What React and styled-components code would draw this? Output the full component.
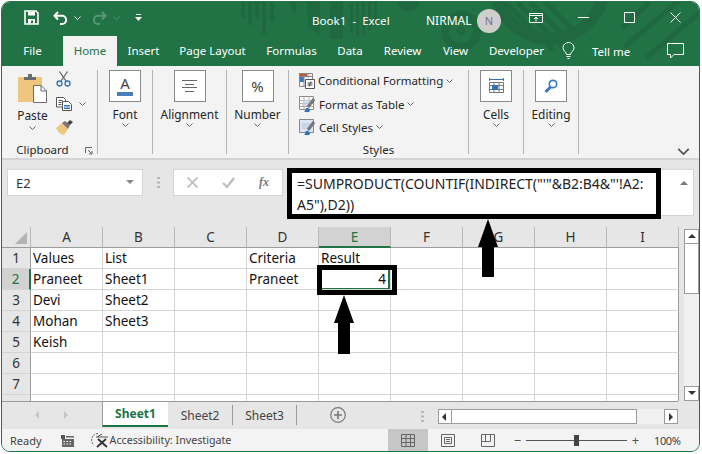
import React from 'react';
import styled, { createGlobalStyle } from 'styled-components';

const Global = createGlobalStyle`
  html, body { margin: 0; padding: 0; background: #fff; }
  body { font-family: "Noto Sans", "Open Sans", sans-serif; }
`;

const GREEN = '#217346';
const DECO = '#1f6840';

const Frame = styled.div`
  position: relative;
  width: 702px;
  height: 454px;
  overflow: hidden;
`;

const Win = styled.div`
  box-sizing: border-box;
  margin: 1px 0 0 1px;
  width: 699px;
  height: 451px;
  border: 1px solid ${GREEN};
  border-radius: 9px;
  overflow: hidden;
  display: flex;
  flex-direction: column;
  background: #e6e6e6;
`;

const Head = styled.div`
  position: relative;
  height: 64px;
  flex: none;
  background: ${GREEN};
  color: #fff;
  font-size: 11.5px;
`;

const Deco = styled.svg`
  position: absolute;
  left: 0;
  top: 0;
`;

const TitleBar = styled.div`
  position: relative;
  height: 34px;
  display: flex;
  align-items: center;
`;

const Qat = styled.div`
  display: flex;
  align-items: center;
  width: 310px;
  height: 100%;
  padding-bottom: 3px;
  box-sizing: border-box;
`;

const QatSlot = styled.div`
  width: ${p => p.$w}px;
  margin-left: ${p => p.$ml || 0}px;
  display: flex;
  justify-content: center;
  opacity: ${p => (p.$dim ? 0.25 : 1)};
`;

const DocTitle = styled.div`
  width: 114px;
  font-size: 11.6px;
  white-space: pre;
  margin-top: 3px;
`;

const UserName = styled.div`
  width: 51px;
  font-size: 12px;
  margin-top: 3px;
`;

const Avatar = styled.div`
  width: 24px;
  height: 24px;
  margin-top: 3px;
  border-radius: 50%;
  background: #d0cdcd;
  color: #7a6f93;
  font-size: 11px;
  display: flex;
  align-items: center;
  justify-content: center;
`;

const WinButton = styled.div`
  width: ${p => p.$w}px;
  margin-left: ${p => p.$ml || 0}px;
  display: flex;
  justify-content: center;
  margin-bottom: 3px;
`;

const TabRow = styled.div`
  position: relative;
  height: 30px;
  display: flex;
`;

const RibbonTab = styled.div`
  width: ${p => p.$w}px;
  margin-right: ${p => p.$mr || 0}px;
  display: flex;
  align-items: center;
  justify-content: center;
  padding-bottom: 1px;
  box-sizing: border-box;
  background: ${p => (p.$active ? '#f3f3f3' : 'transparent')};
  color: ${p => (p.$active ? GREEN : '#fff')};
`;

const TellMe = styled.div`
  display: flex;
  align-items: center;
  gap: 17px;
  margin-left: 3px;
`;

const CommentSlot = styled.div`
  position: absolute;
  right: 15px;
  top: 7px;
`;

const Ribbon = styled.div`
  box-sizing: border-box;
  height: 94px;
  flex: none;
  padding: 4px 0 0;
  background: #f3f3f3;
  border-bottom: 2px solid #d4d4d4;
  display: flex;
  position: relative;
  color: #262626;
  font-size: 11.9px;
`;

const Group = styled.div`
  box-sizing: border-box;
  width: ${p => p.$w}px;
  height: 84px;
  border-right: 1px solid #b5b5b5;
  display: flex;
  flex-direction: column;
  align-items: center;
  position: relative;
`;

const BigBox = styled.div`
  box-sizing: border-box;
  width: 32px;
  height: 32px;
  background: #fff;
  border: 1px solid #8a8a8a;
  display: flex;
  flex-direction: column;
  align-items: center;
  justify-content: center;
  color: #444;
`;

const FontLetter = styled.span`
  font-size: 15px;
  line-height: 15px;
  color: #444;
`;

const FontBar = styled.div`
  width: 16px;
  height: 4px;
  background: #4a7ebb;
  margin-top: 1px;
`;

const PercentSign = styled.span`
  font-size: 15px;
  line-height: 18px;
`;

const BigLabel = styled.div`
  margin-top: 3px;
  line-height: 18px;
`;

const Chev = styled.svg`
  display: block;
  flex: none;
`;

const ClipBody = styled.div`
  display: flex;
  width: 100%;
  height: 70px;
`;

const PasteCol = styled.div`
  width: 47px;
  margin-left: 7px;
  padding-top: 3px;
  display: flex;
  flex-direction: column;
  align-items: center;
`;

const PasteLabel = styled.div`
  line-height: 16px;
  margin-top: 4px;
  margin-bottom: 3px;
`;

const SmallCol = styled.div`
  display: flex;
  flex-direction: column;
  gap: 9.5px;
  padding-top: 1px;
`;

const SmallRow = styled.div`
  display: flex;
  align-items: center;
  gap: 7px;
`;

const GroupLabel = styled.div`
  position: absolute;
  left: 0;
  right: 0;
  bottom: -3px;
  padding-right: ${p => p.$pr || 0}px;
  text-align: center;
  line-height: 14px;
  font-size: 11.5px;
`;

const Launcher = styled.div`
  position: absolute;
  right: 4px;
  bottom: -1px;
  display: flex;
`;

const StyleList = styled.div`
  align-self: stretch;
  display: flex;
  flex-direction: column;
  margin-top: -1px;
  padding-left: 10px;
  font-size: 11.5px;
`;

const StyleRow = styled.div`
  height: 23.4px;
  display: flex;
  align-items: center;
  gap: 3px;
  white-space: nowrap;
`;

const Collapse = styled.div`
  position: absolute;
  right: 9px;
  bottom: 3px;
  display: flex;
`;

const FormulaRow = styled.div`
  height: 67px;
  flex: none;
  padding: 9px 0 0 5px;
  box-sizing: border-box;
  display: flex;
  align-items: flex-start;
`;

const NameBox = styled.div`
  box-sizing: border-box;
  width: 136px;
  height: 27px;
  background: #fff;
  border: 1px solid #d4d4d4;
  display: flex;
  align-items: center;
  justify-content: space-between;
  padding: 0 8px;
  font-size: 13px;
  color: #333;
`;

const Grip = styled.div`
  width: 30px;
  height: 27px;
  display: flex;
  align-items: center;
  justify-content: center;
`;

const FxBox = styled.div`
  box-sizing: border-box;
  width: 110px;
  height: 27px;
  background: #fff;
  border: 1px solid #d4d4d4;
  display: flex;
  align-items: center;
  justify-content: space-between;
  padding: 0 13px 0 13px;
`;

const FxLabel = styled.span`
  font-family: "Liberation Serif", serif;
  font-style: italic;
  font-weight: 700;
  font-size: 12px;
  color: #777;
`;

const FormulaBox = styled.div`
  box-sizing: border-box;
  width: 407px;
  height: 47px;
  margin-left: 4px;
  background: #fff;
  border: 1px solid #d4d4d4;
  position: relative;
  padding: 3px 0 0 9px;
  font-size: 14px;
  line-height: 21px;
  color: #222;
  white-space: nowrap;
`;

const FormulaCaret = styled.div`
  position: absolute;
  right: 5px;
  top: 10px;
  display: flex;
`;

const SheetArea = styled.div`
  height: 174px;
  flex: none;
  display: flex;
  background: #e6e6e6;
`;

const Grid = styled.div`
  display: grid;
  grid-template-columns: 29px repeat(9, 72px);
  grid-auto-rows: 21px;
  height: 174px;
  overflow: hidden;
  font-size: 13.5px;
  color: #111;
`;

const Corner = styled.div`
  border-right: 1px solid #b9b9b9;
  border-bottom: 1px solid #9b9b9b;
  box-sizing: border-box;
  display: flex;
  align-items: flex-end;
  justify-content: flex-end;
  padding: 0 3px 3px 0;
`;

const ColHead = styled.div`
  box-sizing: border-box;
  display: flex;
  align-items: center;
  justify-content: center;
  background: ${p => (p.$on ? '#d2d2d2' : '#e6e6e6')};
  color: ${p => (p.$on ? GREEN : '#333')};
  border-right: 1px solid #b9b9b9;
  border-bottom: ${p => (p.$on ? `2px solid ${GREEN}` : '1px solid #9b9b9b')};
`;

const RowHead = styled.div`
  box-sizing: border-box;
  display: flex;
  align-items: center;
  justify-content: center;
  background: ${p => (p.$on ? '#d2d2d2' : '#e6e6e6')};
  color: ${p => (p.$on ? GREEN : '#333')};
  border-right: ${p => (p.$on ? `2px solid ${GREEN}` : '1px solid #9b9b9b')};
  border-bottom: 1px solid #d4d4d4;
`;

const Cell = styled.div`
  box-sizing: border-box;
  background: #fff;
  border-right: 1px solid ${p => (p.$last ? '#9b9b9b' : '#d4d4d4')};
  border-bottom: 1px solid #d4d4d4;
  display: flex;
  align-items: center;
  justify-content: ${p => (p.$num ? 'flex-end' : 'flex-start')};
  padding: 0 4px 0 2px;
  white-space: nowrap;
  position: relative;
  box-shadow: ${p => (p.$sel ? `inset -2px -1px 0 ${GREEN}` : 'none')};
`;

const VScroll = styled.div`
  width: 20px;
  display: flex;
  flex-direction: column;
  align-items: flex-end;
  padding-top: 2px;
  box-sizing: border-box;
  height: 174px;
`;

const ScrollBtn = styled.div`
  box-sizing: border-box;
  width: ${p => p.$w || 15}px;
  height: ${p => p.$h || 15}px;
  background: #fff;
  border: 1px solid #9b9b9b;
  display: flex;
  align-items: center;
  justify-content: center;
  flex: none;
`;

const VThumb = styled.div`
  box-sizing: border-box;
  width: 15px;
  height: 50px;
  background: #fff;
  border: 1px solid #9b9b9b;
  border-top-width: 0;
`;

const VTrack = styled.div`
  width: 15px;
  flex: 1;
  background: #f0f0f0;
`;

const SheetBar = styled.div`
  box-sizing: border-box;
  height: 28px;
  flex: none;
  display: flex;
  align-items: flex-start;
  border-top: 1px solid #9b9b9b;
  width: 676px;
  color: #444;
  font-size: 12px;
`;

const SheetNav = styled.div`
  width: 100px;
  height: 26px;
  display: flex;
  align-items: center;
  justify-content: space-evenly;
  padding: 0 12px;
  box-sizing: border-box;
`;

const SheetTab = styled.div`
  box-sizing: border-box;
  width: ${p => p.$w}px;
  height: ${p => (p.$on ? 25 : 20)}px;
  margin-top: ${p => (p.$on ? 0 : 3)}px;
  display: flex;
  align-items: center;
  justify-content: center;
  background: ${p => (p.$on ? '#fff' : 'transparent')};
  color: ${p => (p.$on ? GREEN : '#444')};
  font-weight: ${p => (p.$on ? 700 : 400)};
  border-bottom: ${p => (p.$on ? `2px solid ${GREEN}` : 'none')};
  border-right: ${p => (p.$sep ? '1px solid #9b9b9b' : 'none')};
  border-left: ${p => (p.$on ? '1px solid #9b9b9b' : 'none')};
`;

const AddSheet = styled.div`
  margin: 5px 0 0 33px;
  display: flex;
`;

const HScroll = styled.div`
  display: flex;
  margin: 7px 0 0 auto;
  align-items: center;
`;

const SplitDots = styled.div`
  margin-right: 14px;
  display: flex;
`;

const HThumb = styled.div`
  box-sizing: border-box;
  width: 185px;
  height: 15px;
  background: #fff;
  border: 1px solid #9b9b9b;
  border-left-width: 0;
`;

const HTrack = styled.div`
  width: 27px;
  height: 15px;
  background: #f0f0f0;
`;

const StatusBar = styled.div`
  flex: 1;
  background: #f3f3f3;
  display: flex;
  align-items: center;
  font-size: 11px;
  color: #444;
  padding-left: 8px;
`;

const StatusIcon = styled.div`
  margin-left: ${p => p.$ml}px;
  margin-right: ${p => p.$mr || 0}px;
  display: flex;
`;

const AccessText = styled.span`
  font-size: 10.7px;
`;

const StatusRight = styled.div`
  margin-left: auto;
  display: flex;
  align-items: center;
  height: 100%;
`;

const ViewBtn = styled.div`
  width: 40px;
  height: 100%;
  display: flex;
  align-items: center;
  justify-content: center;
  background: ${p => (p.$on ? '#c6c6c6' : 'transparent')};
`;

const Zoom = styled.div`
  display: flex;
  align-items: center;
  width: 129px;
  margin-left: 4px;
  gap: 3px;
`;

const ZoomTrack = styled.div`
  position: relative;
  width: 101px;
  height: 1px;
  background: #555;
`;

const ZoomThumb = styled.div`
  position: absolute;
  left: 48px;
  top: -5px;
  width: 5px;
  height: 11px;
  background: #444;
`;

const ZoomSign = styled.span`
  font-size: 13px;
  line-height: 13px;
  width: 11px;
  text-align: center;
  color: #555;
`;

const ZoomValue = styled.div`
  width: 45px;
  font-size: 11px;
  margin-left: 13px;
  letter-spacing: -0.4px;
`;

const Callout = styled.div`
  position: absolute;
  box-sizing: border-box;
  left: ${p => p.$x}px;
  top: ${p => p.$y}px;
  width: ${p => p.$w}px;
  height: ${p => p.$h}px;
  border: ${p => p.$b}px solid #000;
  pointer-events: none;
`;

const Arrow = styled.svg`
  position: absolute;
  left: ${p => p.$x}px;
  top: ${p => p.$y}px;
`;

const Chevron = ({ c = '#666', w = 7, h = 4 }) => (
  <Chev width={w} height={h} viewBox="0 0 7 4" fill="none" stroke={c} strokeWidth="1">
    <path d="M.5.5 3.5 3.5 6.5.5" />
  </Chev>
);

const Tri = ({ dir, c = '#333' }) => {
  const d = { up: 'M4 1 8 5H0Z', down: 'M0 1H8L4 5Z', left: 'M5 0V8L1 4Z', right: 'M2 0V8L6 4Z' }[dir];
  return (
    <svg width="8" height="8" viewBox="0 0 8 8" style={{ display: 'block' }}>
      <path d={d} fill={c} />
    </svg>
  );
};

const HeadArt = () => (
  <Deco width="697" height="64" viewBox="2 2 697 64" fill={DECO}>
    <path d="M241 0h4v18h-4zM248 0h4v25h-4zM255 0h4v19h-4zM262 0h4v34h-4zM270 0h4v22h-4zM288 0h9l-2 16zM307 0h13v35l-12-8zM330 0h13v39h-13zM350 0h3v33h-3zM356 0h3v36h-3zM362 0h3v35h-3zM368 0h3v30h-3zM374 0h3v26h-3z" />
    <path d="M397 0h23a11.500 11.500 0 0 1-23 0z" />
    <g fill="none" stroke={DECO}>
      <circle cx="461" cy="31" r="16" strokeWidth="8" />
      <circle cx="461" cy="31" r="3" strokeWidth="3" />
      <path d="M498 0a55 58 0 0 0 104 0" strokeWidth="12" />
      <path d="M505 2 553 50M517 2 563 48M530 2 572 44M545 2 578 35" strokeWidth="5" />
      <path d="M624 47 686 -5M646 58 699 13M622 28 650 2" strokeWidth="5" />
    </g>
  </Deco>
);

const SaveIcon = () => (
  <svg width="15" height="15" viewBox="0 0 15 15" fill="none" style={{ display: 'block' }}>
    <path d="M1 1H12L14 3V14H1Z" stroke="#fff" strokeWidth="1.6" />
    <path d="M4 1.500H11V5.500H4ZM4 9H11V13.500H9V10.500H7V13.500H4Z" fill="#fff" />
  </svg>
);

const UndoIcon = ({ flip }) => (
  <svg width="15" height="14" viewBox="0 0 15 14" fill="none" style={{ display: 'block', transform: flip ? 'scaleX(-1)' : 'none' }}>
    <path d="M5 1 1.500 4.800 5 8.500" stroke="#fff" strokeWidth="2" />
    <path d="M2 4.800H9A4 4 0 0 1 9 13H7" stroke="#fff" strokeWidth="2" />
  </svg>
);

const CustomizeIcon = () => (
  <svg width="7" height="8" viewBox="0 0 7 8" style={{ display: 'block' }}>
    <path d="M1 0h5v1H1zM0 3h7L3.500 7z" fill="#fff" />
  </svg>
);

const RibbonDisplayIcon = () => (
  <svg width="14" height="12" viewBox="0 0 14 12" fill="none" stroke="#fff" style={{ display: 'block' }}>
    <path d="M.5 1.500h13v9H.5zM.5 3.500h13M7 9.500V5M5 7l2-2 2 2" />
  </svg>
);

const MinIcon = () => (
  <svg width="11" height="3" viewBox="0 0 11 3" style={{ display: 'block' }}><path d="M0 1h11v1H0z" fill="#fff" /></svg>
);

const MaxIcon = () => (
  <svg width="11" height="11" viewBox="0 0 11 11" fill="none" stroke="#fff" style={{ display: 'block' }}><path d="M.5.500h10v10H.5z" /></svg>
);

const CloseIcon = () => (
  <svg width="11" height="11" viewBox="0 0 11 11" fill="none" stroke="#fff" style={{ display: 'block' }}><path d="M.5.500l10 10M10.500.500l-10 10" /></svg>
);

const BulbIcon = () => (
  <svg width="13" height="18" viewBox="0 0 13 18" fill="none" stroke="#fff" style={{ display: 'block' }}>
    <path d="M4.500 12.500C4.500 10 1 9 1 5.800A5.500 5.300 0 0 1 12 5.800C12 9 8.500 10 8.500 12.500ZM4.500 14.500h4M5.500 16.500h2" />
  </svg>
);

const CommentIcon = () => (
  <svg width="17" height="16" viewBox="0 0 17 16" fill="none" stroke="#fff" style={{ display: 'block' }}>
    <path d="M.5.500h16v11H7L3.500 15v-3.500H.5z" />
  </svg>
);

const PasteIcon = () => (
  <svg width="29" height="30" viewBox="0 0 29 30" style={{ display: 'block' }}>
    <path d="M0 4h24v25H0z" fill="#eec67e" />
    <path d="M6 4h12v3H6zM10 1h4v3h-4z" fill="#6d6d6d" />
    <path d="M15.500 12.500H23L28.500 18V29.500H15.500Z" fill="#fff" stroke="#6d6d6d" />
    <path d="M23 12.500V18H28.500" fill="none" stroke="#6d6d6d" />
  </svg>
);

const CutIcon = () => (
  <svg width="15" height="16" viewBox="0 0 15 16" fill="none" style={{ display: 'block' }}>
    <path d="M5 10 11.500 0.500M10 10 3.500 0.500" stroke="#666" strokeWidth="1.300" />
    <circle cx="3.500" cy="12.500" r="2.500" stroke="#2f75b5" strokeWidth="1.300" />
    <circle cx="11.500" cy="12.500" r="2.500" stroke="#2f75b5" strokeWidth="1.300" />
  </svg>
);

const CopyIcon = () => (
  <svg width="16" height="14" viewBox="0 0 16 14" fill="none" style={{ display: 'block' }}>
    <path d="M.5.500h7l2 2V10H.5z" fill="#fff" stroke="#555" />
    <path d="M6.500 4.500h6l3 3v6h-9z" fill="#fff" stroke="#555" />
    <path d="M2.500 3.500h4M2.500 5.500h3M2.500 7.500h3" stroke="#555" />
    <path d="M8 8.500h6M8 10h6M8 11.500h6" stroke="#2f75b5" />
  </svg>
);

const BrushIcon = () => (
  <svg width="17" height="16" viewBox="0 0 17 16" style={{ display: 'block' }}>
    <path d="M0 8 6 3 12 9 8 15C5 15 2 12 0 8Z" fill="#eec67e" />
    <path d="M6 3 9 1 14 5 12 9Z" fill="#777" />
    <path d="M11 3 14 0 17 2 14 5Z" fill="#444" />
  </svg>
);

const LauncherIcon = () => (
  <svg width="8" height="8" viewBox="0 0 8 8" fill="none" stroke="#666" style={{ display: 'block' }}>
    <path d="M.5 6V.500H7M3 3l4 4M7 4v3H4" />
  </svg>
);

const AlignIcon = () => (
  <svg width="15" height="12" viewBox="0 0 15 12" stroke="#666" style={{ display: 'block' }}>
    <path d="M0 .5h15M3 4.500h9M0 7.500h15M3 11.500h9" />
  </svg>
);

const CondIcon = () => (
  <svg width="16" height="16" viewBox="0 0 16 16" fill="none" style={{ display: 'block' }}>
    <path d="M0 0h8v3H0z" fill="#c9502f" />
    <path d="M0 3h5v6H0z" fill="#3f78b8" />
    <path d="M.500.500h13v13H.5zM.500 3.500h13M5 .500v13M9 .500v4" stroke="#888" />
    <path d="M6.500 6.500h9v9h-9z" fill="#fff" stroke="#555" />
    <path d="M8.500 10h5M8.500 12h5M12 8.500l-2 5" stroke="#444" />
  </svg>
);

const TableIcon = ({ plain }) => (
  <svg width="17" height="17" viewBox="0 0 17 17" fill="none" style={{ display: 'block' }}>
    <path d="M.500.500h14v13H.5z" fill={plain ? '#dbe5f1' : '#fff'} stroke="#888" />
    {!plain && <path d="M.500 4.500h14M.500 7.500h14M.500 10.500h14M5 .500v13M10 .500v13" stroke="#aaa" />}
    <path d="M3 4h9v6H3z" fill="#c6d4e6" opacity={plain ? 1 : 0.7} />
    <path d="M15 3 9 11" stroke="#777" strokeWidth="3" />
    <path d="M7 12a3 3 0 0 1 4 3c-1 1.500-4 1.500-6 .5 1-.500 1.500-2 2-3.500z" fill="#2f75b5" />
  </svg>
);

const CellsIcon = () => (
  <svg width="15" height="17" viewBox="0 0 15 17" fill="none" style={{ display: 'block' }}>
    <path d="M.500 0v3M14.500 0v3M1 1.500h13" stroke="#2f75b5" />
    <path d="M.500 4.500h14v10H.5zM.500 7.500h14M.500 11.500h14M5 4.500v10M10 4.500v10" stroke="#777" />
    <path d="M3 7h6v5H3z" fill="#2f75b5" />
  </svg>
);

const SearchIcon = () => (
  <svg width="14" height="15" viewBox="0 0 14 15" fill="none" style={{ display: 'block' }}>
    <circle cx="9" cy="5" r="3.700" stroke="#3b78c2" strokeWidth="1.700" />
    <path d="M6.500 8 1.500 13" stroke="#3b78c2" strokeWidth="3" />
  </svg>
);

const CancelIcon = () => (
  <svg width="11" height="11" viewBox="0 0 11 11" stroke="#bdbdbd" strokeWidth="1.600" style={{ display: 'block' }}>
    <path d="M.5.500l10 10M10.500.500l-10 10" />
  </svg>
);

const CheckIcon = () => (
  <svg width="13" height="11" viewBox="0 0 13 11" fill="none" stroke="#bdbdbd" strokeWidth="2.200" style={{ display: 'block' }}>
    <path d="M1 6l4 4 7-9" />
  </svg>
);

const GripDots = ({ c = '#b5b5b5' }) => (
  <svg width="3" height="11" viewBox="0 0 3 11" fill={c} style={{ display: 'block' }}>
    <path d="M0 0h3v2H0zM0 4.500h3v2H0zM0 9h3v2H0z" />
  </svg>
);

const AddIcon = () => (
  <svg width="16" height="16" viewBox="0 0 16 16" fill="none" stroke="#777" style={{ display: 'block' }}>
    <circle cx="8" cy="8" r="7.300" strokeWidth="1.200" />
    <path d="M8 4v8M4 8h8" strokeWidth="1.600" />
  </svg>
);

const MacroIcon = () => (
  <svg width="13" height="13" viewBox="0 0 13 13" style={{ display: 'block' }}>
    <path d="M0 1h4v4H0z" fill="#555" />
    <path d="M5 2h8v1.500H5zM1 5h12v8H1z" fill="#666" />
    <path d="M2.500 7h1.500v1H2.500zM5.500 7H7v1H5.500zM8.500 7H10v1H8.500zM2.500 9.500h1.500v1H2.500zM5.500 9.500H7v1H5.500zM8.500 9.500H10v1H8.500z" fill="#fff" />
  </svg>
);

const AccessIcon = () => (
  <svg width="18" height="15" viewBox="0 0 18 15" fill="none" style={{ display: 'block' }}>
    <path d="M7 .5A6.500 6.500 0 0 0 3 12" stroke="#666" strokeDasharray="2 1" />
    <path d="M6 4 11 1M5 4l12 0" stroke="#555" />
    <path d="M7 6l9 8M15 6l-9 8" stroke="#333" strokeWidth="1.800" />
  </svg>
);

const NormalView = () => (
  <svg width="14" height="13" viewBox="0 0 14 13" fill="none" stroke="#666" style={{ display: 'block' }}>
    <path d="M.500.500h13v12H.5zM.500 4.500h13M.500 8.500h13M5 .500v12M9.500 .500v12" />
  </svg>
);

const LayoutView = () => (
  <svg width="14" height="13" viewBox="0 0 14 13" fill="none" stroke="#666" style={{ display: 'block' }}>
    <path d="M.500.500h13v12H.5zM3.500 3.500h7v6h-7zM5 5.500h4M5 7.500h4" />
  </svg>
);

const BreakView = () => (
  <svg width="14" height="13" viewBox="0 0 14 13" fill="none" stroke="#666" style={{ display: 'block' }}>
    <path d="M.500.500h13v12H.5zM.500 7.500h9V.500M4.500.500v7" />
  </svg>
);

const tabs = [
  { t: 'File', w: 61, mr: 0 },
  { t: 'Home', w: 54, mr: 1, active: true },
  { t: 'Insert', w: 51 },
  { t: 'Page Layout', w: 87 },
  { t: 'Formulas', w: 71 },
  { t: 'Data', w: 46 },
  { t: 'Review', w: 59 },
  { t: 'View', w: 47 },
  { t: 'Developer', w: 75 },
];

const columns = ['A', 'B', 'C', 'D', 'E', 'F', 'G', 'H', 'I'];

const rows = [
  ['Values', 'List', '', 'Criteria', 'Result'],
  ['Praneet', 'Sheet1', '', 'Praneet', '4'],
  ['Devi', 'Sheet2'],
  ['Mohan', 'Sheet3'],
  ['Keish'],
  [],
  [],
  [],
];

const BigGroup = ({ w, label, children }) => (
  <Group $w={w}>
    <BigBox>{children}</BigBox>
    <BigLabel>{label}</BigLabel>
    <Chevron />
  </Group>
);

const App = () => (
  <Frame>
    <Global />
    <Win>
      <Head>
        <HeadArt />
        <TitleBar>
          <Qat>
            <QatSlot $w={15} $ml={22}><SaveIcon /></QatSlot>
            <QatSlot $w={15} $ml={14}><UndoIcon /></QatSlot>
            <QatSlot $w={7} $ml={6}><Chevron c="#fff" /></QatSlot>
            <QatSlot $w={15} $ml={11} $dim><UndoIcon flip /></QatSlot>
            <QatSlot $w={7} $ml={6} $dim><Chevron c="#fff" /></QatSlot>
            <QatSlot $w={7} $ml={15}><CustomizeIcon /></QatSlot>
          </Qat>
          <DocTitle>Book1  -  Excel</DocTitle>
          <UserName>NIRMAL</UserName>
          <Avatar>N</Avatar>
          <WinButton $w={14} $ml={28}><RibbonDisplayIcon /></WinButton>
          <WinButton $w={11} $ml={35}><MinIcon /></WinButton>
          <WinButton $w={11} $ml={35}><MaxIcon /></WinButton>
          <WinButton $w={11} $ml={35}><CloseIcon /></WinButton>
        </TitleBar>
        <TabRow>
          {tabs.map(tab => (
            <RibbonTab key={tab.t} $w={tab.w} $mr={tab.mr} $active={tab.active}>{tab.t}</RibbonTab>
          ))}
          <TellMe>
            <QatSlot $w={13} $ml={5}><BulbIcon /></QatSlot>
            <span>Tell me</span>
          </TellMe>
          <CommentSlot><CommentIcon /></CommentSlot>
        </TabRow>
      </Head>

      <Ribbon>
        <Group $w={96}>
          <ClipBody>
            <PasteCol>
              <PasteIcon />
              <PasteLabel>Paste</PasteLabel>
              <Chevron />
            </PasteCol>
            <SmallCol>
              <SmallRow><CutIcon /></SmallRow>
              <SmallRow><CopyIcon /><Chevron /></SmallRow>
              <SmallRow><BrushIcon /></SmallRow>
            </SmallCol>
          </ClipBody>
          <GroupLabel $pr={14}>Clipboard</GroupLabel>
          <Launcher><LauncherIcon /></Launcher>
        </Group>
        <BigGroup w={55} label="Font">
          <FontLetter>A</FontLetter>
          <FontBar />
        </BigGroup>
        <BigGroup w={74} label="Alignment"><AlignIcon /></BigGroup>
        <BigGroup w={62} label="Number"><PercentSign>%</PercentSign></BigGroup>
        <Group $w={180}>
          <StyleList>
            <StyleRow><CondIcon /><span>Conditional Formatting</span><Chevron /></StyleRow>
            <StyleRow><TableIcon /><span>Format as Table</span><Chevron /></StyleRow>
            <StyleRow><TableIcon plain /><span>Cell Styles</span><Chevron /></StyleRow>
          </StyleList>
          <GroupLabel>Styles</GroupLabel>
        </Group>
        <BigGroup w={55} label="Cells"><CellsIcon /></BigGroup>
        <BigGroup w={55} label="Editing"><SearchIcon /></BigGroup>
        <Collapse>
          <Chevron w={13} h={7} c="#555" />
        </Collapse>
      </Ribbon>

      <FormulaRow>
        <NameBox>
          <span>E2</span>
          <Tri dir="down" c="#888" />
        </NameBox>
        <Grip><GripDots /></Grip>
        <FxBox>
          <CancelIcon />
          <CheckIcon />
          <FxLabel>fx</FxLabel>
        </FxBox>
        <FormulaBox>
          =SUMPRODUCT(COUNTIF(INDIRECT("'"&amp;B2:B4&amp;"'!A2:
          <br />
          A5"),D2))
          <FormulaCaret>
            <Tri dir="up" c="#777" />
          </FormulaCaret>
        </FormulaBox>
      </FormulaRow>

      <SheetArea>
        <Grid>
          <Corner>
            <svg width="12" height="12" viewBox="0 0 12 12" style={{ display: 'block' }}>
              <path d="M12 0V12H0Z" fill="#b4b4b4" />
            </svg>
          </Corner>
          {columns.map(c => <ColHead key={c} $on={c === 'E'}>{c}</ColHead>)}
          {rows.map((row, r) => (
            <React.Fragment key={r}>
              <RowHead $on={r === 1}>{r < 7 ? r + 1 : ''}</RowHead>
              {columns.map((c, i) => (
                <Cell
                  key={c}
                  $last={i === 8}
                  $num={r === 1 && i === 4}
                  $sel={r === 1 && i === 4}
                >
                  {row[i]}
                </Cell>
              ))}
            </React.Fragment>
          ))}
        </Grid>
        <VScroll>
          <ScrollBtn><Tri dir="up" /></ScrollBtn>
          <VThumb />
          <VTrack />
          <ScrollBtn><Tri dir="down" /></ScrollBtn>
        </VScroll>
      </SheetArea>

      <SheetBar>
        <SheetNav>
          <Tri dir="left" c="#c4c4c4" />
          <Tri dir="right" c="#c4c4c4" />
        </SheetNav>
        <SheetTab $w={66} $on>Sheet1</SheetTab>
        <SheetTab $w={65} $sep>Sheet2</SheetTab>
        <SheetTab $w={64} $sep>Sheet3</SheetTab>
        <AddSheet><AddIcon /></AddSheet>
        <HScroll>
          <SplitDots><GripDots /></SplitDots>
          <ScrollBtn $w={14}><Tri dir="left" /></ScrollBtn>
          <HThumb />
          <HTrack />
          <ScrollBtn $w={14}><Tri dir="right" /></ScrollBtn>
        </HScroll>
      </SheetBar>

      <StatusBar>
        <span>Ready</span>
        <StatusIcon $ml={19}><MacroIcon /></StatusIcon>
        <StatusIcon $ml={17} $mr={1}><AccessIcon /></StatusIcon>
        <AccessText>Accessibility: Investigate</AccessText>
        <StatusRight>
          <ViewBtn $on><NormalView /></ViewBtn>
          <ViewBtn><LayoutView /></ViewBtn>
          <ViewBtn><BreakView /></ViewBtn>
          <Zoom>
            <ZoomSign>−</ZoomSign>
            <ZoomTrack><ZoomThumb /></ZoomTrack>
            <ZoomSign>+</ZoomSign>
          </Zoom>
          <ZoomValue>100%</ZoomValue>
        </StatusRight>
      </StatusBar>
    </Win>

    <Callout $x={287} $y={168} $w={374} $h={51} $b={5} />
    <Callout $x={317} $y={265} $w={80} $h={30} $b={5} />
    <Arrow $x={478} $y={219} width="20" height="59" viewBox="0 0 20 59">
      <path d="M10 0 20 28H16V58H4V28H0Z" fill="#000" />
    </Arrow>
    <Arrow $x={334} $y={295} width="20" height="60" viewBox="0 0 20 60">
      <path d="M10 0 20 28H16V59H4V28H0Z" fill="#000" />
    </Arrow>
  </Frame>
);

export default App;
